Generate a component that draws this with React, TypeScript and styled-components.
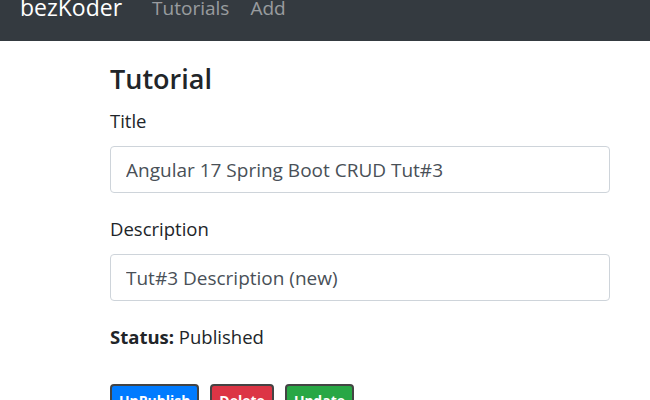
import styled, { createGlobalStyle } from "styled-components";

const GlobalStyle = createGlobalStyle`
  html, body {
    margin: 0;
    padding: 0;
    background: #fff;
    font-family: "Open Sans", "Noto Sans", Arial, sans-serif;
    color: #212529;
  }
`;

const App = () => {
  return (
    <>
      <GlobalStyle />
      <Navbar>
        <Brand>bezKoder</Brand>
        <NavLinks>
          <NavLink>Tutorials</NavLink>
          <NavLink>Add</NavLink>
        </NavLinks>
      </Navbar>
      <Page>
        <EditForm>
          <Heading>Tutorial</Heading>
          <Field>
            <Label>Title</Label>
            <Input defaultValue="Angular 17 Spring Boot CRUD Tut#3" />
          </Field>
          <Field>
            <Label>Description</Label>
            <Input defaultValue="Tut#3 Description (new)" />
          </Field>
          <Status>
            <strong>Status:</strong> Published
          </Status>
          <Actions>
            <Badge $color="#007bff">UnPublish</Badge>
            <Badge $color="#dc3545">Delete</Badge>
            <Badge $color="#28a745">Update</Badge>
          </Actions>
        </EditForm>
      </Page>
    </>
  );
};

export default App;

const Navbar = styled.nav`
  height: 41px;
  background: #343a40;
  display: flex;
  align-items: flex-start;
  padding: 0 20px;
  overflow: hidden;
`;

const Brand = styled.span`
  font-size: 23px;
  line-height: 30px;
  margin-top: -8px;
  color: #fff;
  margin-right: 30px;
`;

const NavLinks = styled.div`
  display: flex;
  gap: 21px;
  margin-top: -7px;
`;

const NavLink = styled.span`
  font-size: 19px;
  line-height: 30px;
  color: rgba(255, 255, 255, 0.5);
`;

const Page = styled.main`
  padding: 0 40px 0 110px;
`;

const EditForm = styled.div`
  width: 500px;
`;

const Heading = styled.h4`
  margin: 20px 0 10px;
  font-size: 27px;
  font-weight: 600;
  line-height: 36px;
`;

const Field = styled.div`
  display: flex;
  flex-direction: column;
  margin-bottom: 22px;
`;

const Label = styled.label`
  font-size: 18.5px;
  line-height: 27px;
  margin-bottom: 12px;
`;

const Input = styled.input`
  box-sizing: border-box;
  width: 100%;
  height: 47px;
  padding: 0 15px;
  font-family: inherit;
  font-size: 19px;
  color: #495057;
  border: 1px solid #ced4da;
  border-radius: 4px;
  outline: none;
`;

const Status = styled.div`
  font-size: 18.5px;
  line-height: 27px;
  margin-top: 1px;

  strong {
    font-weight: 700;
  }
`;

const Actions = styled.div`
  display: flex;
  gap: 11px;
  margin-top: 34px;
`;

const Badge = styled.button<{ $color: string }>`
  font-family: inherit;
  font-size: 14px;
  font-weight: 700;
  line-height: 20px;
  padding: 5px 7px;
  color: #fff;
  background: ${({ $color }) => $color};
  border: 2px solid #444;
  border-radius: 4px;
`;
